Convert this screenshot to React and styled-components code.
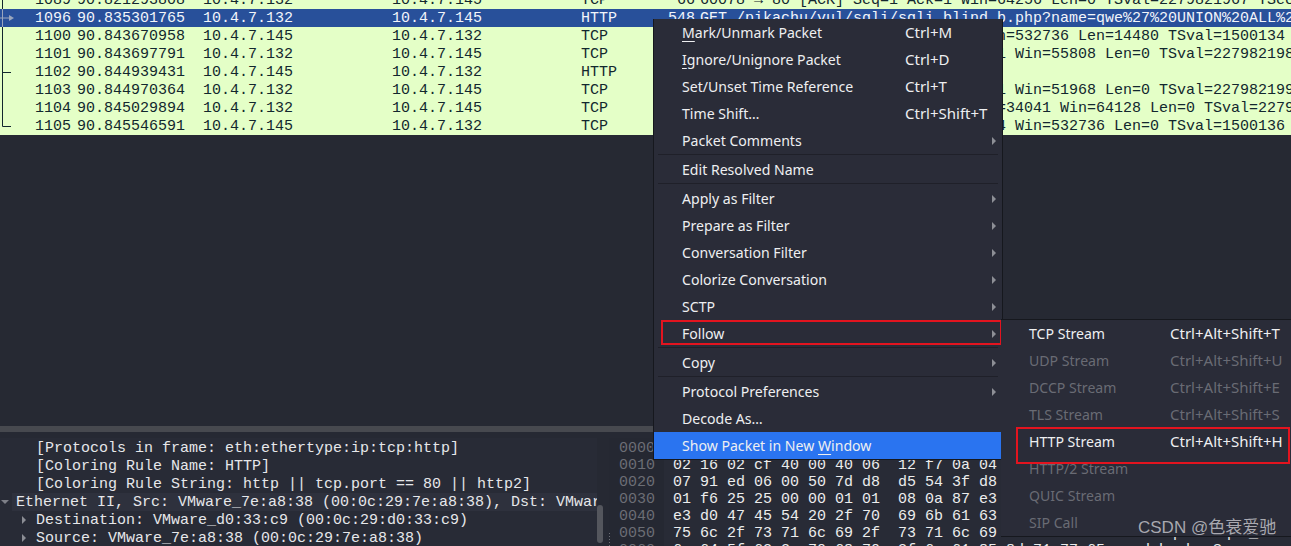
import React from "react";
import styled, { createGlobalStyle, css } from "styled-components";

const GlobalStyle = createGlobalStyle`
  html, body { margin: 0; padding: 0; background: #262933; }
  #root { width: 1291px; height: 546px; overflow: hidden; }
`;

const Page = styled.div`
  position: relative;
  width: 1291px;
  height: 546px;
  overflow: hidden;
  display: flex;
  flex-direction: column;
  background: #262933;
  font-family: "Liberation Mono", monospace;
  font-size: 15px;
`;

const PacketList = styled.div`
  height: 135px;
  flex: none;
  overflow: hidden;
  background: #e4ffc7;
`;

const PacketRows = styled.div`
  margin-top: -9px;
`;

const PacketRow = styled.div`
  display: grid;
  grid-template-columns: 16px 55px 132px 189px 189px 68px 46px 1fr;
  height: 18px;
  line-height: 20px;
  white-space: pre;
  background: ${({ $selected }) => ($selected ? "#28509a" : "#e4ffc7")};
  color: ${({ $selected }) => ($selected ? "#f2f5fa" : "#12272e")};
`;

const Cell = styled.span`
  overflow: hidden;
  height: 18px;
  text-align: ${({ $right }) => ($right ? "right" : "left")};
  padding-left: ${({ $pad }) => $pad || 0}px;
`;

const Mark = ({ kind }) => (
  <svg width="16" height="18" viewBox="0 0 16 18">
    {kind === "sel" ? (
      <g>
        <path d="M0 9H10" stroke="#9aa6bd" strokeWidth="1" />
        <path d="M9 6L14 9L9 12Z" fill="#9aa6bd" />
        <path d="M2.5 0V18" stroke="#9aa6bd" strokeWidth="1" />
      </g>
    ) : (
      <g stroke="#12272e" strokeWidth="1" fill="none">
        {kind === "end" ? <path d="M2.5 0V9.5H11" /> : <path d="M2.5 0V18" />}
        {kind === "tick" && <path d="M2.5 9.5H11" />}
      </g>
    )}
  </svg>
);

const EmptyArea = styled.div`
  flex: 1;
`;

const Splitter = styled.div`
  flex: none;
  height: 6px;
  background: #47494f;
`;

const BottomPanes = styled.div`
  flex: none;
  height: 108px;
  margin-top: 6px;
  display: flex;
  overflow: hidden;
`;

const TreePane = styled.div`
  width: 597px;
  flex: none;
  padding-top: 1px;
  position: relative;
  overflow: hidden;
  background: #282b36;
`;

const TreeRow = styled.div`
  display: flex;
  align-items: flex-start;
  height: 18px;
  line-height: 20px;
  margin-left: ${({ $focus }) => ($focus ? 12 : 0)}px;
  padding-left: ${({ $indent, $focus }) => $indent - ($focus ? 12 : 0)}px;
  background: ${({ $focus }) => ($focus ? "#2e313d" : "transparent")};
  color: #e6e7ea;
  white-space: pre;
`;

const Caret = styled.span`
  position: absolute;
  align-self: center;
  left: ${({ $x }) => $x}px;
  width: 0;
  height: 0;
  ${({ $open }) =>
    $open
      ? css`
          border-left: 4px solid transparent;
          border-right: 4px solid transparent;
          border-top: 4px solid #7d7f87;
        `
      : css`
          border-top: 4px solid transparent;
          border-bottom: 4px solid transparent;
          border-left: 4px solid #8b8d94;
        `}
`;

const TreeScroll = styled.div`
  width: 6px;
  flex: none;
  margin-right: 6px;
  padding-top: 67px;
`;

const ScrollThumb = styled.div`
  width: 6px;
  height: 38px;
  border-radius: 3px;
  background: #54565d;
`;

const HexPane = styled.div`
  flex: 1;
  position: relative;
  display: flex;
  overflow: hidden;
  background: #282b36;
`;

const PaneGrip = styled.div`
  position: absolute;
  left: 0;
  top: 95px;
  width: 1px;
  height: 13px;
  background: repeating-linear-gradient(#6d6f76 0 1px, transparent 1px 3px);
`;

const HexOffsets = styled.div`
  width: 55px;
  flex: none;
  padding: 1px 0 0 10px;
  box-sizing: border-box;
  color: #6c6e75;
  background: #252832;
`;

const HexBytes = styled.div`
  padding: 1px 0 0 9px;
  color: #eceded;
  white-space: pre;
`;

const HexLine = styled.div`
  height: 17px;
  line-height: 19px;
`;

const Menu = styled.div`
  position: absolute;
  left: 653px;
  top: 19px;
  width: 348px;
  background: #2a2c38;
  border: 1px solid #16181e;
  border-top: 0;
  font-family: "Noto Sans", sans-serif;
  font-size: 14.1px;
  color: #eeeff1;
`;

const SubMenu = styled(Menu)`
  left: 1001px;
  top: 319px;
  width: 300px;
  border-left: 0;
  border-top: 1px solid #16181e;
`;

const MenuRow = styled.div`
  position: relative;
  display: grid;
  grid-template-columns: ${({ $sub }) => ($sub ? "141px 1fr" : "223px 1fr 4px")};
  align-items: center;
  height: 27px;
  padding: 0 6px 0 28px;
  white-space: pre;
  color: ${({ $disabled }) => ($disabled ? "#696b74" : "inherit")};
  background: ${({ $active }) => ($active ? "#2a74f0" : "transparent")};
  ${({ $boxed }) =>
    $boxed &&
    css`
      &::after {
        content: "";
        position: absolute;
        border: 2px solid #e3141f;
        ${$boxed === "follow"
          ? "left: 7px; right: 0; top: 0; height: 21px;"
          : "left: 15px; width: 270px; top: -1px; height: 33px;"}
      }
    `}
`;

const Shortcut = styled.span`
  font-size: 15px;
  margin-bottom: 2px;
`;

const Arrow = styled.span`
  width: 0;
  height: 0;
  border-top: 4px solid transparent;
  border-bottom: 4px solid transparent;
  border-left: 4px solid #8d8f96;
`;

const Separator = styled.div`
  height: 2px;
  margin: 0 4px;
  background: linear-gradient(#1f2029 1px, transparent 1px);
`;

const Mnemonic = styled.span`
  text-decoration: underline;
  text-underline-offset: 3px;
`;

const Watermark = styled.div`
  position: absolute;
  left: 1138px;
  top: 517px;
  font-family: "Liberation Sans", "Noto Sans CJK SC", sans-serif;
  font-size: 17px;
  line-height: 22px;
  color: rgba(205, 205, 210, 0.78);
  white-space: pre;
`;

const packets = [
  ["1089", "90.821293808", "10.4.7.132", "10.4.7.145", "TCP", "66", "60078 → 80 [ACK] Seq=1 Ack=1 Win=64256 Len=0 TSval=2279821967 TSecr=1500120", "line"],
  ["1096", "90.835301765", "10.4.7.132", "10.4.7.145", "HTTP", "548", "GET /pikachu/vul/sqli/sqli_blind_b.php?name=qwe%27%20UNION%20ALL%20SELECT%20NULL", "sel"],
  ["1100", "90.843670958", "10.4.7.145", "10.4.7.132", "TCP", "1514", "80 → 34041 [ACK] Seq=1 Ack=483 Win=532736 Len=14480 TSval=1500134 TSecr=2279", "line"],
  ["1101", "90.843697791", "10.4.7.132", "10.4.7.145", "TCP", "66", "34041 → 80 [ACK] Seq=483 Ack=14481 Win=55808 Len=0 TSval=2279821986 TSecr", "line"],
  ["1102", "90.844939431", "10.4.7.145", "10.4.7.132", "HTTP", "6906", "HTTP/1.1 200 OK  (text/html)", "tick"],
  ["1103", "90.844970364", "10.4.7.132", "10.4.7.145", "TCP", "66", "34041 → 80 [ACK] Seq=483 Ack=21321 Win=51968 Len=0 TSval=2279821997 TSecr", "line"],
  ["1104", "90.845029894", "10.4.7.132", "10.4.7.145", "TCP", "66", "34041 → 80 [FIN, ACK] Seq=483 Ack=34041 Win=64128 Len=0 TSval=2279821998", "line"],
  ["1105", "90.845546591", "10.4.7.145", "10.4.7.132", "TCP", "66", "80 → 34041 [ACK] Seq=34041 Ack=484 Win=532736 Len=0 TSval=1500136 TSecr=2279", "end"],
];

const treeRows = [
  { text: "[Protocols in frame: eth:ethertype:ip:tcp:http]", indent: 36 },
  { text: "[Coloring Rule Name: HTTP]", indent: 36 },
  { text: "[Coloring Rule String: http || tcp.port == 80 || http2]", indent: 36 },
  { text: "Ethernet II, Src: VMware_7e:a8:38 (00:0c:29:7e:a8:38), Dst: VMware_d0:33:c9", indent: 16, focus: true, open: true, caret: 1 },
  { text: "Destination: VMware_d0:33:c9 (00:0c:29:d0:33:c9)", indent: 36, caret: 22 },
  { text: "Source: VMware_7e:a8:38 (00:0c:29:7e:a8:38)", indent: 36, caret: 22 },
];

const hexRows = [
  ["0000", "00 0c 29 d0 33 c9 00 0c  29 7e a8 38 08 00 45 00   ..).3... ).8..E."],
  ["0010", "02 16 02 cf 40 00 40 06  12 f7 0a 04 07 84 0a 04   ....@.@. ........"],
  ["0020", "07 91 ed 06 00 50 7d d8  d5 54 3f d8 b7 5e 80 18   .....P}. .T?..^.."],
  ["0030", "01 f6 25 25 00 00 01 01  08 0a 87 e3 e3 d0 00 16   ..%%.... ........"],
  ["0040", "e3 d0 47 45 54 20 2f 70  69 6b 61 63 68 75 2f 76   ..GET /p ikachu/v"],
  ["0050", "75 6c 2f 73 71 6c 69 2f  73 71 6c 69 5f 62 6c 69   ul/sqli/ sqli_bli"],
  ["0060", "6e 64 5f 62 2e 70 68 70  3f 6e 61 85 8d 71 77 65   nd_b.php ?na..qwe"],
];

const mainMenu = [
  { label: [<Mnemonic key="m">M</Mnemonic>, "ark/Unmark Packet"], keys: "Ctrl+M" },
  { label: [<Mnemonic key="i">I</Mnemonic>, "gnore/Unignore Packet"], keys: "Ctrl+D" },
  { label: "Set/Unset Time Reference", keys: "Ctrl+T" },
  { label: "Time Shift…", keys: "Ctrl+Shift+T" },
  { label: "Packet Comments", arrow: true },
  { sep: true },
  { label: "Edit Resolved Name" },
  { sep: true },
  { label: "Apply as Filter", arrow: true },
  { label: "Prepare as Filter", arrow: true },
  { label: "Conversation Filter", arrow: true },
  { label: "Colorize Conversation", arrow: true },
  { label: "SCTP", arrow: true },
  { label: "Follow", arrow: true, boxed: "follow" },
  { sep: true },
  { label: "Copy", arrow: true },
  { sep: true },
  { label: "Protocol Preferences", arrow: true },
  { label: "Decode As…" },
  { label: ["Show Packet in New ", <Mnemonic key="w">W</Mnemonic>, "indow"], active: true },
];

const followMenu = [
  { label: "TCP Stream", keys: "Ctrl+Alt+Shift+T" },
  { label: "UDP Stream", keys: "Ctrl+Alt+Shift+U", disabled: true },
  { label: "DCCP Stream", keys: "Ctrl+Alt+Shift+E", disabled: true },
  { label: "TLS Stream", keys: "Ctrl+Alt+Shift+S", disabled: true },
  { label: "HTTP Stream", keys: "Ctrl+Alt+Shift+H", boxed: "http" },
  { label: "HTTP/2 Stream", disabled: true },
  { label: "QUIC Stream", disabled: true },
  { label: "SIP Call", disabled: true },
];

const App = () => {
  return (
    <Page>
      <GlobalStyle />
      <PacketList>
        <PacketRows>
          {packets.map((p) => (
            <PacketRow key={p[0]} $selected={p[7] === "sel"}>
              <Mark kind={p[7]} />
              <Cell $right>{p[0]}</Cell>
              <Cell $pad={6}>{p[1]}</Cell>
              <Cell>{p[2]}</Cell>
              <Cell>{p[3]}</Cell>
              <Cell>{p[4]}</Cell>
              <Cell $right>{p[5]}</Cell>
              <Cell $pad={5}>{p[6]}</Cell>
            </PacketRow>
          ))}
        </PacketRows>
      </PacketList>
      <EmptyArea />
      <Splitter />
      <BottomPanes>
        <TreePane>
          {treeRows.map((r) => (
            <TreeRow key={r.text} $indent={r.indent} $focus={r.focus}>
              {r.caret && <Caret $x={r.caret} $open={r.open} />}
              {r.text}
            </TreeRow>
          ))}
        </TreePane>
        <TreeScroll>
          <ScrollThumb />
        </TreeScroll>
        <HexPane>
          <PaneGrip />
          <HexOffsets>
            {hexRows.map((r) => (
              <HexLine key={r[0]}>{r[0]}</HexLine>
            ))}
          </HexOffsets>
          <HexBytes>
            {hexRows.map((r) => (
              <HexLine key={r[0]}>{r[1]}</HexLine>
            ))}
          </HexBytes>
        </HexPane>
      </BottomPanes>

      <Menu>
        {mainMenu.map((item, i) =>
          item.sep ? (
            <Separator key={i} />
          ) : (
            <MenuRow key={i} $active={item.active} $boxed={item.boxed}>
              <span>{item.label}</span>
              <Shortcut>{item.keys}</Shortcut>
              {item.arrow && <Arrow />}
            </MenuRow>
          )
        )}
      </Menu>
      <SubMenu>
        {followMenu.map((item) => (
          <MenuRow key={item.label} $sub $disabled={item.disabled} $boxed={item.boxed}>
            <span>{item.label}</span>
            <Shortcut>{item.keys}</Shortcut>
          </MenuRow>
        ))}
      </SubMenu>
      <Watermark>CSDN @色衰爱驰</Watermark>
    </Page>
  );
};

export default App;
